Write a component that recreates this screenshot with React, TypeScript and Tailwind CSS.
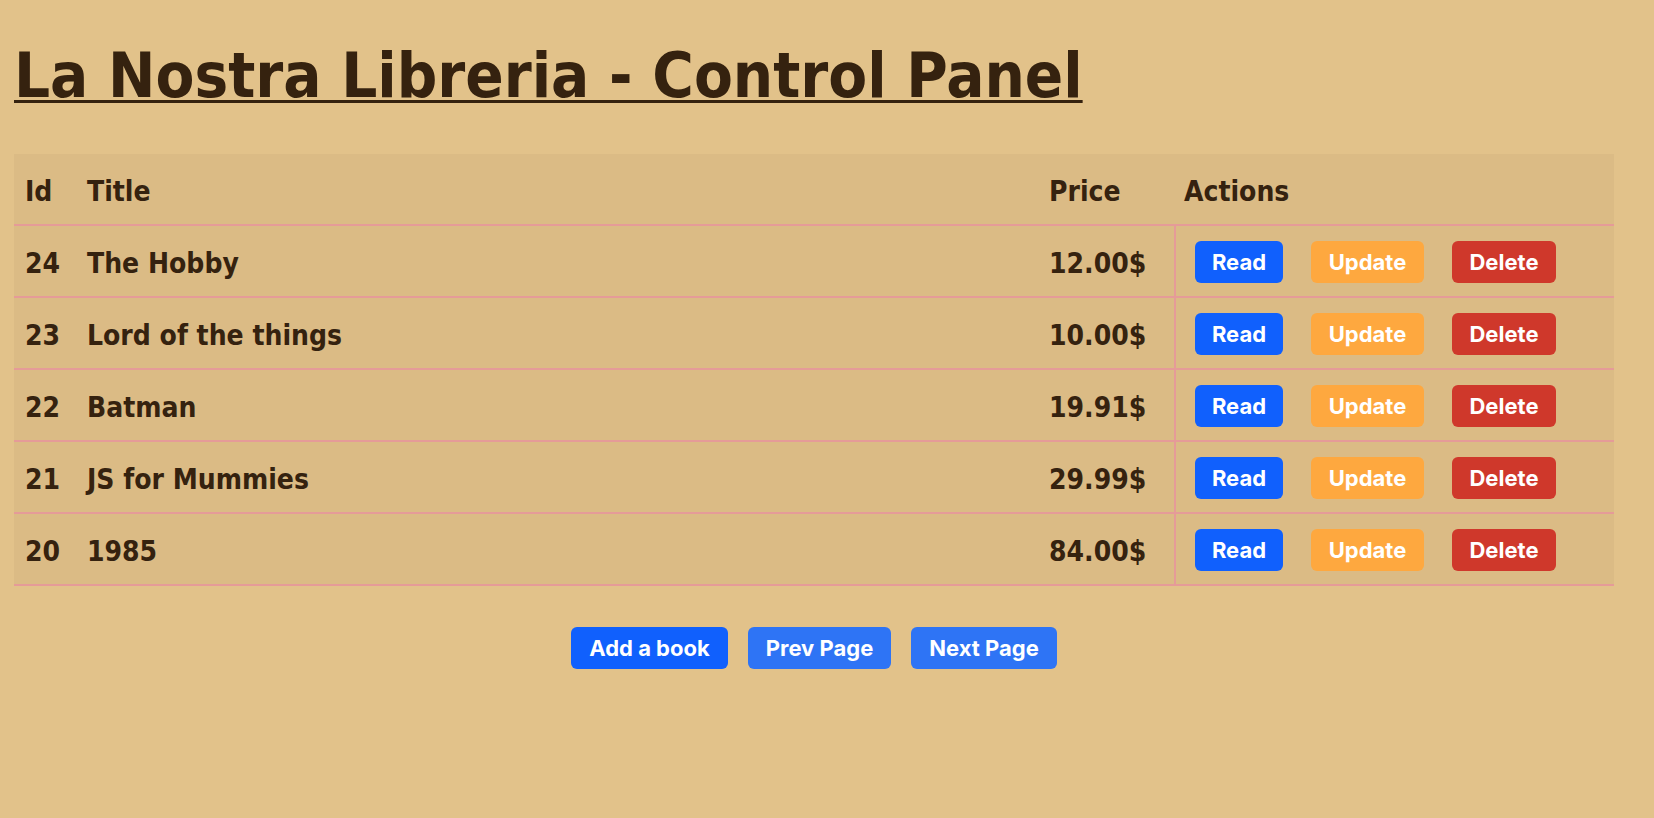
const books = [
  { id: 24, title: "The Hobby", price: "12.00$" },
  { id: 23, title: "Lord of the things", price: "10.00$" },
  { id: 22, title: "Batman", price: "19.91$" },
  { id: 21, title: "JS for Mummies", price: "29.99$" },
  { id: 20, title: "1985", price: "84.00$" },
];

const cols = "grid grid-cols-[63px_962px_135px_440px]";
const cell = "flex items-center pt-[5px]";
const btn =
  "h-[42px] rounded-[6px] text-[22px] font-bold text-white font-['Inter',sans-serif] flex items-center justify-center";

export default function App() {
  return (
    <div className="min-h-screen bg-[#e2c28a] text-[#35220f] font-['DejaVu_Sans_Condensed','DejaVu_Sans',sans-serif] px-[14px]">
      <h1 className="pt-[44px] text-[63px] leading-none font-bold underline decoration-[3px] underline-offset-[3px]">
        La Nostra Libreria - Control Panel
      </h1>

      <div className="mt-[47px] w-[1600px]">
        <div className="bg-[#dbbb85] text-[28px] font-bold">
          <div className={`${cols} h-[72px] border-b-2 border-[#e59b98]`}>
            <div className={`${cell} pl-[11px]`}>Id</div>
            <div className={`${cell} pl-[10px]`}>Title</div>
            <div className={`${cell} pl-[10px]`}>Price</div>
            <div className={`${cell} pl-[10px]`}>Actions</div>
          </div>
          {books.map((b) => (
            <div key={b.id} className={`${cols} h-[72px] border-b-2 border-[#e59b98]`}>
              <div className={`${cell} pl-[11px]`}>{b.id}</div>
              <div className={`${cell} pl-[10px]`}>{b.title}</div>
              <div className={`${cell} pl-[10px]`}>{b.price}</div>
              <div className="flex items-center gap-[28px] pl-[19px] pt-[2px] border-l-2 border-[#e59b98]">
                <button className={`${btn} w-[88px] bg-[#1060fd]`}>Read</button>
                <button className={`${btn} w-[113px] bg-[#fea83f]`}>Update</button>
                <button className={`${btn} w-[104px] bg-[#cf382b]`}>Delete</button>
              </div>
            </div>
          ))}
        </div>

        <div className="mt-[41px] flex justify-center gap-[20px]">
          <button className={`${btn} w-[157px] bg-[#1060fd]`}>Add a book</button>
          <button className={`${btn} w-[143px] bg-[#2e74f5]`}>Prev Page</button>
          <button className={`${btn} w-[146px] bg-[#2e74f5]`}>Next Page</button>
        </div>
      </div>
    </div>
  );
}
